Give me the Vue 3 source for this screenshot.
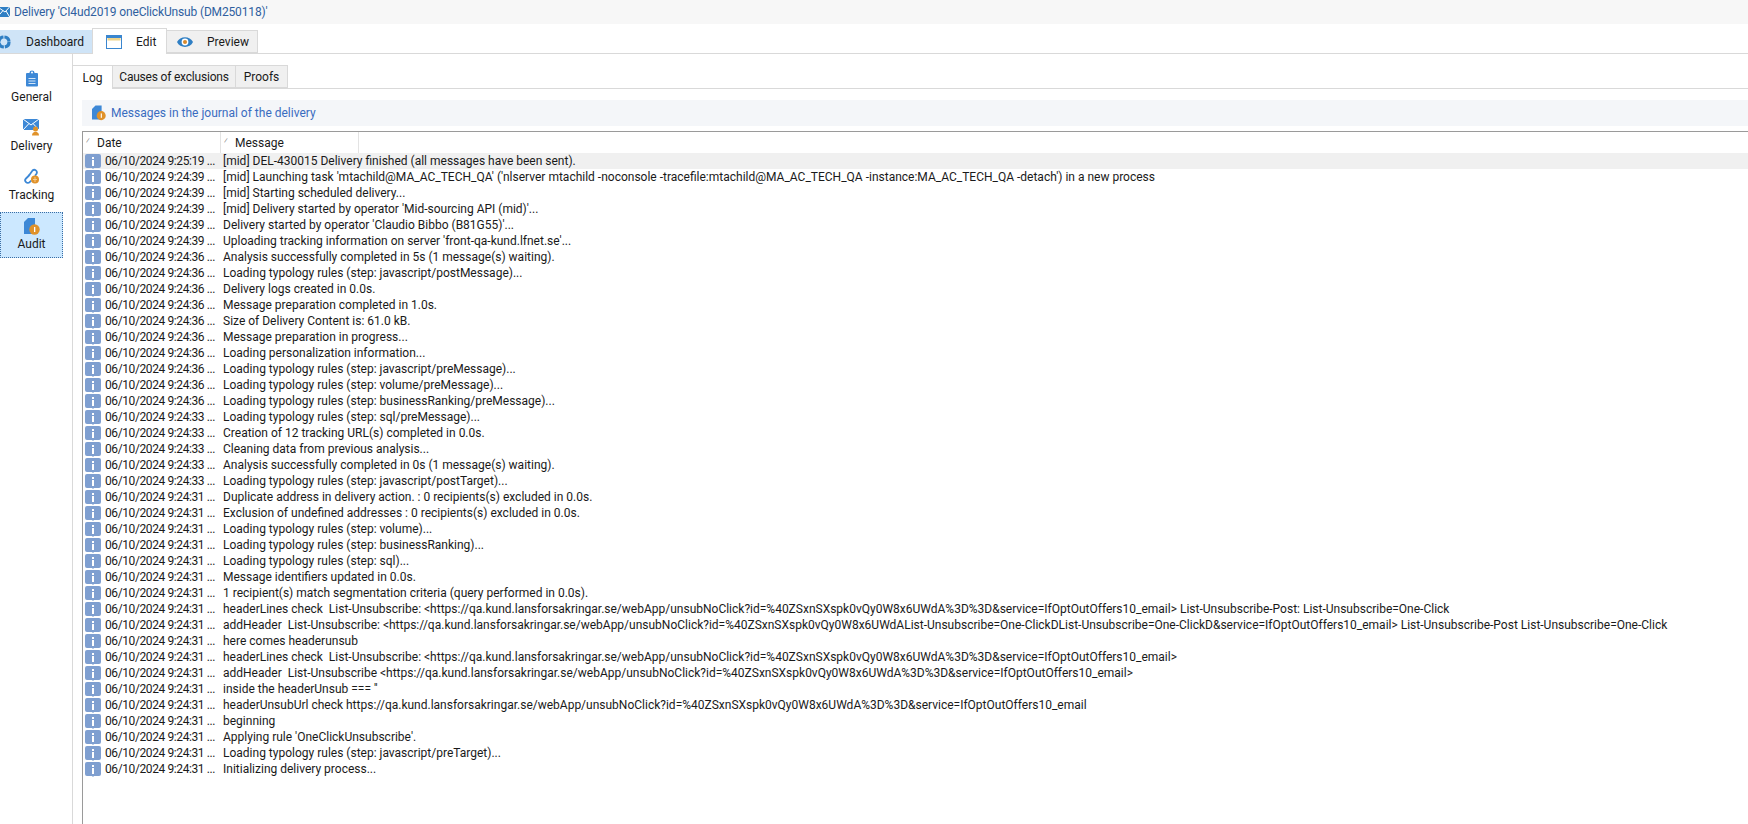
<script setup>
const t1 = '06/10/2024 9:24:39 ...', t2 = '06/10/2024 9:24:36 ...', t3 = '06/10/2024 9:24:33 ...', t4 = '06/10/2024 9:24:31 ...'
const rows = [
  ['06/10/2024 9:25:19 ...', "[mid] DEL-430015 Delivery finished (all messages have been sent)."],
  [t1, "[mid] Launching task 'mtachild@MA_AC_TECH_QA' ('nlserver mtachild -noconsole -tracefile:mtachild@MA_AC_TECH_QA -instance:MA_AC_TECH_QA -detach') in a new process"],
  [t1, "[mid] Starting scheduled delivery..."],
  [t1, "[mid] Delivery started by operator 'Mid-sourcing API (mid)'..."],
  [t1, "Delivery started by operator 'Claudio Bibbo (B81G55)'..."],
  [t1, "Uploading tracking information on server 'front-qa-kund.lfnet.se'..."],
  [t2, "Analysis successfully completed in 5s (1 message(s) waiting)."],
  [t2, "Loading typology rules (step: javascript/postMessage)..."],
  [t2, "Delivery logs created in 0.0s."],
  [t2, "Message preparation completed in 1.0s."],
  [t2, "Size of Delivery Content is: 61.0 kB."],
  [t2, "Message preparation in progress..."],
  [t2, "Loading personalization information..."],
  [t2, "Loading typology rules (step: javascript/preMessage)..."],
  [t2, "Loading typology rules (step: volume/preMessage)..."],
  [t2, "Loading typology rules (step: businessRanking/preMessage)..."],
  [t3, "Loading typology rules (step: sql/preMessage)..."],
  [t3, "Creation of 12 tracking URL(s) completed in 0.0s."],
  [t3, "Cleaning data from previous analysis..."],
  [t3, "Analysis successfully completed in 0s (1 message(s) waiting)."],
  [t3, "Loading typology rules (step: javascript/postTarget)..."],
  [t4, "Duplicate address in delivery action. : 0 recipients(s) excluded in 0.0s."],
  [t4, "Exclusion of undefined addresses : 0 recipients(s) excluded in 0.0s."],
  [t4, "Loading typology rules (step: volume)..."],
  [t4, "Loading typology rules (step: businessRanking)..."],
  [t4, "Loading typology rules (step: sql)..."],
  [t4, "Message identifiers updated in 0.0s."],
  [t4, "1 recipient(s) match segmentation criteria (query performed in 0.0s)."],
  [t4, "headerLines check  List-Unsubscribe: <https://qa.kund.lansforsakringar.se/webApp/unsubNoClick?id=%40ZSxnSXspk0vQy0W8x6UWdA%3D%3D&service=IfOptOutOffers10_email> List-Unsubscribe-Post: List-Unsubscribe=One-Click"],
  [t4, "addHeader  List-Unsubscribe: <https://qa.kund.lansforsakringar.se/webApp/unsubNoClick?id=%40ZSxnSXspk0vQy0W8x6UWdAList-Unsubscribe=One-ClickDList-Unsubscribe=One-ClickD&service=IfOptOutOffers10_email> List-Unsubscribe-Post List-Unsubscribe=One-Click"],
  [t4, "here comes headerunsub"],
  [t4, "headerLines check  List-Unsubscribe: <https://qa.kund.lansforsakringar.se/webApp/unsubNoClick?id=%40ZSxnSXspk0vQy0W8x6UWdA%3D%3D&service=IfOptOutOffers10_email>"],
  [t4, "addHeader  List-Unsubscribe <https://qa.kund.lansforsakringar.se/webApp/unsubNoClick?id=%40ZSxnSXspk0vQy0W8x6UWdA%3D%3D&service=IfOptOutOffers10_email>"],
  [t4, "inside the headerUnsub === ''"],
  [t4, "headerUnsubUrl check https://qa.kund.lansforsakringar.se/webApp/unsubNoClick?id=%40ZSxnSXspk0vQy0W8x6UWdA%3D%3D&service=IfOptOutOffers10_email"],
  [t4, "beginning"],
  [t4, "Applying rule 'OneClickUnsubscribe'."],
  [t4, "Loading typology rules (step: javascript/preTarget)..."],
  [t4, "Initializing delivery process..."],
]
</script>

<template>
  <div class="app">
    <div class="title">
      <svg width="12" height="12" viewBox="0 0 12 12"><path d="M-3 1h13v10H-3z" fill="#2f7fc4"/><path d="M-3 .500l8 5.500 5-5.500M-3 11.500l6-7M10 11.500L6 5" stroke="#fff" fill="none"/></svg>
      <span>Delivery 'CI4ud2019 oneClickUnsub (DM250118)'</span>
    </div>
    <div class="main-tabs">
      <div class="mtab dash">
        <svg width="14" height="14" viewBox="0 0 14 14"><circle cx="4" cy="7" r="5" fill="none" stroke="#2f7fc4" stroke-width="3.2" stroke-dasharray="6.800 1"/></svg>
        <span>Dashboard</span>
      </div>
      <div class="mtab edit">
        <svg width="16" height="14" viewBox="0 0 16 14"><rect x=".5" y=".5" width="15" height="13" fill="#fff" stroke="#3a86cf"/><rect x="1" y="1" width="14" height="2" fill="#3a86cf"/><rect x="1.500" y="3" width="13" height="2.500" fill="#efd48a"/></svg>
        <span>Edit</span>
      </div>
      <div class="mtab prev">
        <svg width="16" height="12" viewBox="0 0 16 12"><path d="M0 6c3-6.500 13-6.500 16 0-3 6.500-13 6.500-16 0z" fill="#2f7fc4"/><circle cx="8" cy="6" r="3.400" fill="#fff"/><circle cx="8" cy="6" r="2" fill="#d98a2b"/></svg>
        <span>Preview</span>
      </div>
    </div>
    <div class="body">
      <nav class="side">
        <div class="nav">
          <svg width="14" height="17" viewBox="0 0 14 17"><rect x="1" y="3" width="12" height="13.500" rx="1" fill="#3d88d6"/><path d="M4.500 4V2.500a2.500 2 0 0 1 5 0V4z" fill="#3d88d6"/><circle cx="7" cy="2.500" r="1" fill="#fff"/><path d="M3.500 8.500h7M3.500 11h7M3.500 13.500h7" stroke="#d4e6f7"/></svg>
          <span>General</span>
        </div>
        <div class="nav">
          <svg width="18" height="17" viewBox="0 0 18 17"><rect x="0" y="0" width="16" height="11" fill="#3d88d6"/><path d="M0 0l8 6 8-6M0 11l6-6.500M16 11l-6-6.500" stroke="#fff" fill="none"/><circle cx="12.500" cy="10" r="2.500" fill="#e0922a"/><path d="M9 16.500c0-5 7-5 7 0z" fill="#e0922a"/></svg>
          <span>Delivery</span>
        </div>
        <div class="nav">
          <svg width="17" height="17" viewBox="0 0 17 17"><g fill="none" stroke="#3d88d6" stroke-width="1.800"><path d="M6.500 7l-3.500 3.500a2.600 2.600 0 0 0 3.700 3.700l1.500-1.500"/><path d="M6 7.500l3.500-5a2.600 2.600 0 0 1 4 3.200l-1.500 2"/></g><circle cx="12" cy="11.500" r="4" fill="#e0922a"/><path d="M10 11.500h4M12 9v5" stroke="#f6d7a8" stroke-width=".8"/></svg>
          <span>Tracking</span>
        </div>
        <div class="nav active">
          <svg width="16" height="17" viewBox="0 0 16 17"><path d="M4 0h7v16H0V4z" fill="#3d88d6"/><circle cx="10.500" cy="11.500" r="5.200" fill="#e0922a"/><rect x="10" y="9" width="1.300" height="5" fill="#fff"/></svg>
          <span>Audit</span>
        </div>
      </nav>
      <div class="content">
        <div class="sub-tabs">
          <div class="stab on">Log</div>
          <div class="stab causes">Causes of exclusions</div>
          <div class="stab proofs">Proofs</div>
        </div>
        <div class="pane">
          <div class="banner">
            <svg width="14" height="16" viewBox="0 0 16 17"><path d="M4 0h7v16H0V4z" fill="#3d88d6"/><circle cx="10.500" cy="11.500" r="5.200" fill="#e0922a"/><rect x="10" y="9" width="1.300" height="5" fill="#fff"/></svg>
            <span>Messages in the journal of the delivery</span>
          </div>
          <div class="grid">
            <div class="head">
              <div class="col c1"><i>⁄</i><span>Date</span></div>
              <div class="col c2"><i>⁄</i><span>Message</span></div>
            </div>
            <div v-for="(r, i) in rows" :key="i" class="row" :class="{ sel: i === 0 }">
              <svg class="info" width="16" height="15" viewBox="0 0 16 15"><path d="M2 0h12a2 2 0 0 1 2 2v10a2 2 0 0 1-2 2H9l-1 1-1-1H2a2 2 0 0 1-2-2V2a2 2 0 0 1 2-2z" fill="#7f9fd0"/><rect x="7" y="6" width="2" height="6" fill="#fff"/><rect x="7" y="3" width="2" height="2" fill="#fff"/></svg>
              <span class="date">{{ r[0] }}</span>
              <span class="msg">{{ r[1] }}</span>
            </div>
          </div>
        </div>
      </div>
    </div>
  </div>
</template>

<style>
html, body { margin: 0; overflow: hidden; background: #fff; }
</style>

<style scoped>
.app {
  width: 1748px;
  height: 824px;
  display: flex;
  flex-direction: column;
  overflow: hidden;
  font-family: Roboto, "Open Sans", sans-serif;
  font-size: 12px;
  color: #1a1a1a;
  background: #fff;
}
.title {
  height: 24px;
  flex: none;
  background: #f7f7f7;
  display: flex;
  align-items: center;
  color: #2f5f9f;
  gap: 2px;
  letter-spacing: -0.15px;
}
.main-tabs {
  flex: none;
  display: flex;
  align-items: flex-end;
  box-sizing: border-box;
  height: 30px;
  border-bottom: 1px solid #d9d9d9;
}
.mtab {
  display: flex;
  align-items: center;
  height: 23px;
  box-sizing: border-box;
}
.dash { width: 92px; background: #cfe4f7; gap: 12px; }
.edit {
  width: 75px;
  height: 26px;
  background: #fff;
  border: 1px solid #d9d9d9;
  border-bottom: 0;
  padding-left: 13px;
  gap: 14px;
  margin-bottom: -1px;
}
.prev {
  width: 91px;
  background: #f0f0f0;
  border: 1px solid #d9d9d9;
  border-left: 0;
  padding-left: 10px;
  gap: 14px;
}
.body { flex: 1; display: flex; min-height: 0; }
.side {
  width: 73px;
  flex: none;
  box-sizing: border-box;
  border-right: 1px solid #d9d9d9;
  padding-top: 9px;
  display: flex;
  flex-direction: column;
}
.nav {
  width: 63px;
  height: 49px;
  box-sizing: border-box;
  display: flex;
  flex-direction: column;
  align-items: center;
  justify-content: center;
  gap: 2px;
  line-height: 16px;
}
.nav.active {
  height: 46px;
  background: #cce8ff;
  border: 1px dotted #3a6ea5;
  margin-top: 2px;
  gap: 1px;
}
.content { flex: 1; min-width: 0; display: flex; flex-direction: column; }
.sub-tabs {
  height: 35px;
  flex: none;
  box-sizing: border-box;
  display: flex;
  align-items: flex-end;
  border-bottom: 1px solid #d9d9d9;
}
.stab {
  height: 23px;
  box-sizing: border-box;
  display: flex;
  align-items: center;
  justify-content: center;
  background: #f0f0f0;
  border: 1px solid #d9d9d9;
  border-left: 0;
}
.causes { width: 123px; letter-spacing: -0.2px; }
.proofs { width: 52px; }
.stab.on {
  height: 24px;
  width: 40px;
  background: #fff;
  border-bottom: 0;
  margin-bottom: -1px;
}
.pane {
  flex: 1;
  min-height: 0;
  padding: 11px 0 0 9px;
  display: flex;
  flex-direction: column;
}
.banner {
  height: 26px;
  flex: none;
  background: #f4f6f9;
  display: flex;
  align-items: center;
  padding-left: 10px;
  gap: 5px;
  color: #3a6cc0;
}
.grid {
  flex: 1;
  margin-top: 5px;
  border: 1px solid #9a9a9a;
  border-right: 0;
  border-bottom: 0;
  min-height: 0;
}
.head { height: 21px; display: flex; }
.col {
  box-sizing: border-box;
  height: 21px;
  border-right: 1px solid #e3e3e3;
  display: flex;
  align-items: center;
  position: relative;
  padding-left: 14px;
}
.col i {
  position: absolute;
  left: 3px;
  top: 4px;
  font-size: 8px;
  color: #666;
  font-style: normal;
}
.c1 { width: 138px; }
.c2 { width: 138px; }
.row {
  height: 16px;
  display: flex;
  align-items: center;
  white-space: pre;
}
.row.sel { background: #f0f0f0; }
.info { margin-left: 2px; flex: none; }
.date { margin-left: 4px; width: 118px; flex: none; letter-spacing: -0.4px; }
.msg { flex: none; }
</style>
